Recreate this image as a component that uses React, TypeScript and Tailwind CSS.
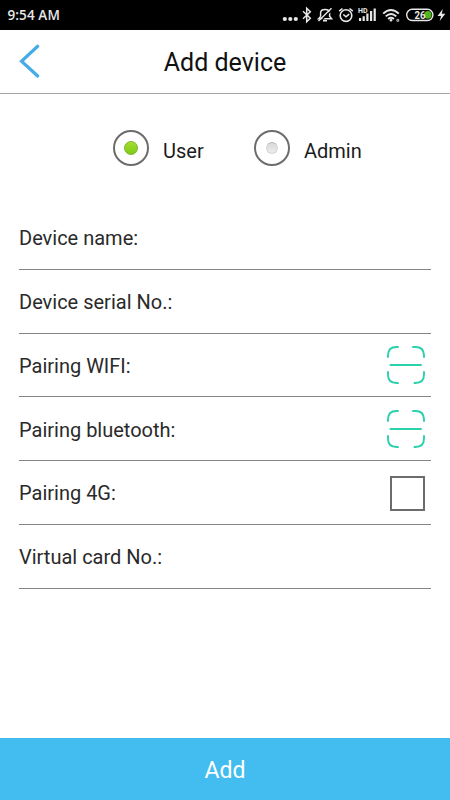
import type { ReactNode } from 'react'

function StatusBar() {
  return (
    <div className="flex h-[30px] shrink-0 items-center justify-between bg-black pl-[7.5px] pr-1 text-[#e8e8e8]">
      <span className="font-['Open_Sans',sans-serif] text-[13.5px] font-semibold leading-[30px] tracking-[0.1px]">9:54 AM</span>
      <div className="flex items-center">
        {/* more notifications */}
        <svg className="h-[30px] w-5" viewBox="282 0 20 30" fill="currentColor">
          <circle cx="284.8" cy="19" r="2.1" />
          <circle cx="290.3" cy="19" r="2.1" />
          <circle cx="295.8" cy="19" r="2.1" />
        </svg>
        {/* bluetooth */}
        <svg className="h-[30px] w-3.5" viewBox="302 0 14 30" fill="none" stroke="currentColor" strokeWidth="1.5">
          <path d="M303 11.3L310.3 18.3L306.7 21.8V8.3L310.3 11.8L303 18.8" />
        </svg>
        {/* muted bell */}
        <svg className="h-[30px] w-[21px]" viewBox="316 0 21 30" fill="none" stroke="currentColor" strokeWidth="1.5">
          <path d="M320.6 16.5V13Q320.6 9.5 325 9.5Q329.6 9.5 329.6 13V16.3L331.6 18.8H318.6L320.6 16.5M323 20.8H327" />
          <path d="M320 21.8L332.7 9.3" stroke="#000" strokeWidth="1.2" />
          <path d="M318.5 21L331.5 8.3" strokeWidth="1.4" />
        </svg>
        {/* alarm */}
        <svg className="h-[30px] w-5" viewBox="337 0 20 30" fill="none" stroke="currentColor" strokeWidth="1.6">
          <circle cx="346" cy="15.6" r="5.8" />
          <path d="M343.3 14.5L346 16.8L349.2 14.2M339.2 11.2L342.5 8.5M352.8 11.2L349.5 8.5" />
        </svg>
        {/* signal */}
        <svg className="h-[30px] w-[23px]" viewBox="357 0 23 30" fill="currentColor">
          <text x="358" y="12.8" fontSize="7" fontWeight="700" fontFamily="Roboto, sans-serif">HD</text>
          <path d="M359 18h2.2v3H359zM362.6 16.2h2.2V21h-2.2zM366.3 13.5h2.2V21h-2.2zM370 11h2.2v10H370zM373.6 8.5h2.2V21h-2.2z" />
        </svg>
        {/* wifi */}
        <svg className="h-[30px] w-6" viewBox="380 0 24 30" fill="none" stroke="currentColor" strokeWidth="1.9">
          <path d="M383.2 13.6Q391 6.2 398.8 13.6M385.7 16.4Q391 11.4 396.3 16.4M388.1 18.9Q391 16.5 393.9 18.9" />
          <circle cx="391" cy="20.2" r="1.3" fill="currentColor" stroke="none" />
          <circle cx="397.8" cy="20.3" r="1" strokeWidth="1.2" stroke="#aaa" />
        </svg>
        {/* battery */}
        <svg className="h-[30px] w-[42px]" viewBox="404 0 42 30">
          <rect x="406.7" y="9.3" width="26.2" height="11.2" rx="5.4" fill="none" stroke="currentColor" strokeWidth="1.4" />
          <circle cx="427.8" cy="14.9" r="3.8" fill="#53b51d" />
          <text x="414.5" y="18.8" fontSize="11.5" fontWeight="700" fontFamily="Roboto, sans-serif" fill="currentColor" textLength="11" lengthAdjust="spacingAndGlyphs">26</text>
          <path d="M442.8 9L437.5 16H441L439.7 21L445.3 13.7H441.8Z" fill="currentColor" />
        </svg>
      </div>
    </div>
  )
}

function ScanIcon() {
  return (
    <svg className="h-[38px] w-[38px]" viewBox="0 0 38 38" fill="none" stroke="#2bd0ad" strokeWidth="1.9" strokeLinecap="round">
      <path d="M1 11V9.5Q1 1 9.5 1H11M26 1H28.5Q37 1 37 9.5V11M37 26V28.5Q37 37 28.5 37H27.5M1 26V28.5Q1 37 9.5 37H11" />
      <path d="M3.5 19H34" />
    </svg>
  )
}

function Radio({ label, checked }: { label: string; checked?: boolean }) {
  return (
    <label className="flex items-center">
      <span className="flex size-9 items-center justify-center rounded-full border-2 border-[#6c6c6c]">
        {checked ? (
          <span className="size-3.5 rounded-full border border-[#7db32d] bg-linear-to-b from-[#a2de2e] to-[#80cb16]" />
        ) : (
          <span className="size-3 rounded-full border border-[#d5d5d5] border-t-[#b5b5b5] bg-linear-to-b from-[#d8d8d8] to-[#ededed]" />
        )}
      </span>
      <span className="ml-3.5 mt-1.5 text-[20px] leading-6 text-[#1c1c1c]">{label}</span>
    </label>
  )
}

function Field({ label, children }: { label: string; children?: ReactNode }) {
  return (
    <div className="flex h-[63.75px] items-center justify-between border-b border-[#858585] pr-[6px]">
      <span className="pt-0.5 text-[20px] leading-6 text-[#2a2a2a]">{label}</span>
      {children}
    </div>
  )
}

export default function App() {
  return (
    <div className="flex h-[800px] w-[450px] flex-col overflow-hidden bg-white font-[Roboto,sans-serif]">
      <StatusBar />

      <header className="grid h-16 shrink-0 grid-cols-[60px_1fr_60px] items-center border-b border-[#a6a6a6]">
        <svg className="ml-[19px] h-9 w-[22px]" viewBox="0 0 22 36" fill="none" stroke="#46ace8" strokeWidth="3.2" strokeLinecap="round">
          <path d="M18.7 2.3L2.5 17.2L18.7 32" />
        </svg>
        <h1 className="pt-0.5 text-center text-[25px] leading-8 text-[#111]">Add device</h1>
      </header>

      <div className="mt-9 flex h-9 items-center pl-[113px]">
        <div className="w-[141px]">
          <Radio label="User" checked />
        </div>
        <Radio label="Admin" />
      </div>

      <main className="mt-[40px] flex-1 px-[19px]">
        <Field label="Device name:" />
        <Field label="Device serial No.:" />
        <Field label="Pairing WIFI:">
          <ScanIcon />
        </Field>
        <Field label="Pairing bluetooth:">
          <ScanIcon />
        </Field>
        <Field label="Pairing 4G:">
          <span className="mt-0.5 size-[35px] border-2 border-[#6c6c6c]" />
        </Field>
        <Field label="Virtual card No.:" />
      </main>

      <button className="h-[62px] shrink-0 bg-[#43bdef] pt-1 text-[23px] text-white">Add</button>
    </div>
  )
}
